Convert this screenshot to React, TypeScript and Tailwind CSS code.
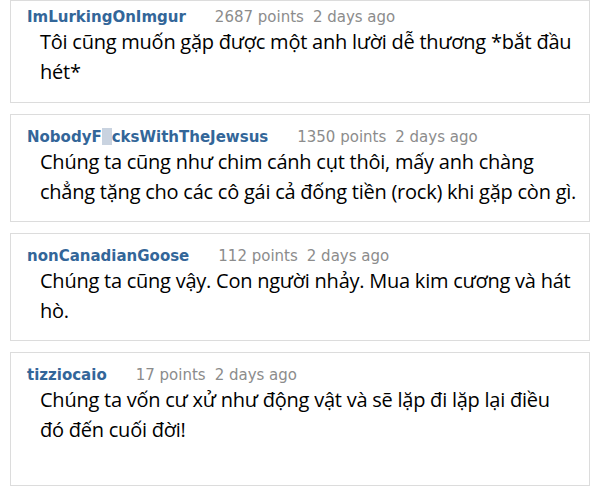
import React from "react";

interface IComment {
  author: string;
  points: number;
  age: string;
  lines: string[];
}

const comments: IComment[] = [
  {
    author: "ImLurkingOnImgur",
    points: 2687,
    age: "2 days ago",
    lines: ["Tôi cũng muốn gặp được một anh lười dễ thương *bắt đầu", "hét*"],
  },
  {
    author: "NobodyF_cksWithTheJewsus",
    points: 1350,
    age: "2 days ago",
    lines: [
      "Chúng ta cũng như chim cánh cụt thôi, mấy anh chàng",
      "chẳng tặng cho các cô gái cả đống tiền (rock) khi gặp còn gì.",
    ],
  },
  {
    author: "nonCanadianGoose",
    points: 112,
    age: "2 days ago",
    lines: ["Chúng ta cũng vậy. Con người nhảy. Mua kim cương và hát", "hò."],
  },
  {
    author: "tizziocaio",
    points: 17,
    age: "2 days ago",
    lines: [
      "Chúng ta vốn cư xử như động vật và sẽ lặp đi lặp lại điều",
      "đó đến cuối đời!",
    ],
  },
];

const Author = ({ name }: { name: string }) => {
  // the screenshot has a censor block over one letter
  if (name.includes("_")) {
    const [a, b] = name.split("_");
    return (
      <span>
        {a}
        <span className="inline-block w-[10px] h-[17px] bg-[#c9d3e0] align-[-3px]" />
        {b}
      </span>
    );
  }
  return <span>{name}</span>;
};

const CommentCard = ({ c, first, last }: { c: IComment; first: boolean; last: boolean }) => {
  return (
    <div
      className={`border border-[#dcdcdc] bg-white pl-[16px] ${
        first ? "pt-[7px] pb-[15px]" : last ? "pt-[13px] pb-[40px]" : "pt-[13px] pb-[14px]"
      }`}
    >
      <div className="flex items-baseline text-[15px] leading-[19px] font-['DejaVu_Sans',sans-serif]">
        <span className="font-bold text-[#336699]">
          <Author name={c.author} />
        </span>
        <span className="ml-[29px] text-[#8c8c8c]">{c.points} points</span>
        <span className="ml-[9px] text-[#8c8c8c]">{c.age}</span>
      </div>
      <div className="pl-[13px] text-[20px] leading-[30px] text-black font-['Open_Sans',sans-serif] tracking-[-0.24px]">
        {c.lines.map((l, i) => (
          <div key={i} className="whitespace-nowrap">
            {l}
          </div>
        ))}
      </div>
    </div>
  );
};

export default function App() {
  return (
    <div className="w-[600px] h-[492px] bg-white overflow-hidden pl-[10px] pr-[10px]">
      <div className="flex flex-col gap-[11px]">
        {comments.map((c, i) => (
          <CommentCard key={c.author} c={c} first={i === 0} last={i === comments.length - 1} />
        ))}
      </div>
    </div>
  );
}
